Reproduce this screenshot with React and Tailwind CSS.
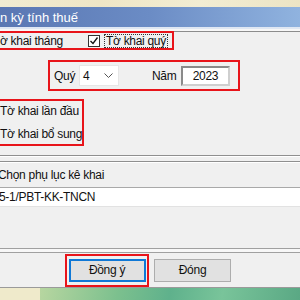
export default function App() {
  const font = { fontFamily: '"Liberation Sans", Arial, sans-serif' };
  return (
    <div className="w-[300px] h-[300px] overflow-hidden flex flex-col bg-[#f0f0f0] text-[12px] tracking-[-0.3px] text-[#111] whitespace-nowrap" style={font}>
      <div className="h-[7px] shrink-0 bg-[linear-gradient(90deg,#f1ecd2,#efe6c6,#f2edd3,#ece4c4)]" />
      <div className="h-[20px] shrink-0 flex items-center bg-[linear-gradient(90deg,#5a77b3,#6b8cc5_50%,#90b3df)]">
        <span className="text-white text-[13px] leading-none tracking-normal">n kỳ tính thuế</span>
      </div>
      <div className="h-[2px] shrink-0 bg-[#dfe7f3]" />
      <div className="h-[2px] shrink-0 bg-[#f7f7f7]" />
      <div className="h-[1px] shrink-0 bg-[#8c8c8c]" />
      {/* Row 1 */}
      <div className="shrink-0 ml-[-4px] w-[178px] h-[19px] border-2 border-[#e8141a] flex items-center mt-[-1px]">
        <span className="ml-[2px] w-[88px]">ờ khai tháng</span>
        <span className="w-[12px] h-[12px] border border-[#333] bg-white flex items-center justify-center">
          <svg width="10" height="10" viewBox="0 0 10 10"><path d="M1.5 5 L4 7.5 L8.5 1.5" fill="none" stroke="#111" strokeWidth="1.3" /></svg>
        </span>
        <span className="ml-[4px] px-[1px] border border-dotted border-[#333] leading-[12px]">Tờ khai quý</span>
      </div>
      {/* Row 2 */}
      <div className="shrink-0 mt-[10px] ml-[48px] w-[192px] h-[31px] border-2 border-[#e8141a] flex items-center">
        <span className="ml-[4px] w-[25px]">Quý</span>
        <div className="w-[40px] h-[21px] bg-white border border-[#e6e6e6] flex items-center justify-between pl-[3px] pr-[5px]">
          <span>4</span>
          <svg width="9" height="6" viewBox="0 0 9 6"><path d="M0.5 0.5 L4.5 4.5 L8.5 0.5" fill="none" stroke="#555" strokeWidth="1" /></svg>
        </div>
        <span className="ml-[33px] w-[29px]">Năm</span>
        <div className="w-[49px] h-[20px] bg-white border-2 border-t-[#8a8a8a] border-l-[#8a8a8a] border-r-[#cfcfcf] border-b-[#cfcfcf] flex items-center justify-center">
          <span>2023</span>
        </div>
      </div>
      {/* Row 3 */}
      <div className="shrink-0 mt-[8px] ml-[-4px] w-[88px] h-[47px] border-2 border-[#e8141a] flex flex-col justify-center gap-[9px]">
        <span className="ml-[2px] leading-[14px]">Tờ khai lần đầu</span>
        <span className="ml-[2px] leading-[14px]">Tờ khai bổ sung</span>
      </div>
      {/* group lines */}
      <div className="shrink-0 mt-[9px] h-[1px] bg-[#8f8f8f]" />
      <div className="shrink-0 h-[1px] bg-white" />
      <div className="shrink-0 mt-[4px] h-[1px] bg-[#8f8f8f]" />
      <div className="shrink-0 h-[1px] bg-white" />
      <div className="shrink-0 h-[24px] flex items-center">
        <span className="ml-[-2px]">Chọn phụ lục kê khai</span>
      </div>
      <div className="shrink-0 h-[1px] bg-[#a9a9a9]" />
      <div className="shrink-0 h-[18px] bg-white flex items-center">
        <span className="ml-[-1px]">5-1/PBT-KK-TNCN</span>
      </div>
      <div className="shrink-0 h-[1px] bg-[#e2e2e2]" />
      <div className="shrink-0 h-[41px]" />
      <div className="shrink-0 h-[1px] bg-[#a0a0a0]" />
      <div className="shrink-0 h-[3px] bg-[#f7f7f7]" />
      <div className="shrink-0 h-[1px] bg-[#a0a0a0]" />
      <div className="shrink-0 h-[34px] flex items-center">
        <div className="ml-[65px] w-[84px] h-[33px] border-2 border-[#e8141a] flex items-center justify-center">
          <button className="w-[77px] h-[23px] bg-[#e1e1e1] border-2 border-[#0f78d6] flex items-center justify-center">
            <span>Đồn<u>g</u> ý</span>
          </button>
        </div>
        <button className="ml-[5px] w-[77px] h-[23px] bg-[#e1e1e1] border border-[#adadad] flex items-center justify-center">
          <span>Đón<u>g</u></span>
        </button>
      </div>
      <div className="shrink-0 h-[1px] bg-[#9a9a9a]" />
      <div className="flex-1 flex">
        <div className="w-[40px] bg-[#efeacb]" />
        <div className="flex-1 bg-[linear-gradient(100deg,#b7d6a0,#7cc08e_30%,#5fb18c_50%,#79c49a_70%,#5aa884)]" />
      </div>
    </div>
  );
}
